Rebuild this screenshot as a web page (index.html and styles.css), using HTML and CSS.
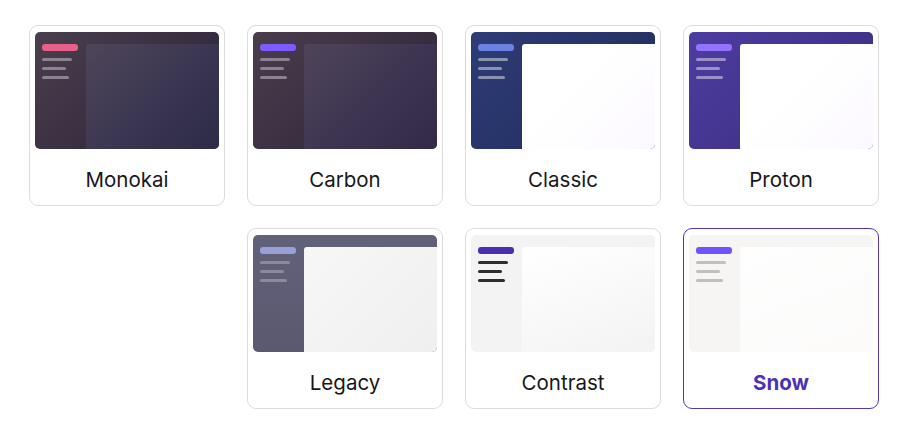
FILE: index.html
```html
<!DOCTYPE html>
<html lang="en">
<head>
<meta charset="utf-8">
<title>Themes</title>
<link rel="stylesheet" href="styles.css">
</head>
<body>
<div class="grid">
  <div class="card theme-monokai">
    <div class="preview"><div class="side"><span class="pill"></span><span class="ln l1"></span><span class="ln l2"></span><span class="ln l3"></span></div><div class="main"></div></div>
    <div class="label">Monokai</div>
  </div>
  <div class="card theme-carbon">
    <div class="preview"><div class="side"><span class="pill"></span><span class="ln l1"></span><span class="ln l2"></span><span class="ln l3"></span></div><div class="main"></div></div>
    <div class="label">Carbon</div>
  </div>
  <div class="card theme-classic">
    <div class="preview"><div class="side"><span class="pill"></span><span class="ln l1"></span><span class="ln l2"></span><span class="ln l3"></span></div><div class="main"></div></div>
    <div class="label">Classic</div>
  </div>
  <div class="card theme-proton">
    <div class="preview"><div class="side"><span class="pill"></span><span class="ln l1"></span><span class="ln l2"></span><span class="ln l3"></span></div><div class="main"></div></div>
    <div class="label">Proton</div>
  </div>
  <div class="card theme-legacy col2">
    <div class="preview"><div class="side"><span class="pill"></span><span class="ln l1"></span><span class="ln l2"></span><span class="ln l3"></span></div><div class="main"></div></div>
    <div class="label">Legacy</div>
  </div>
  <div class="card theme-contrast">
    <div class="preview"><div class="side"><span class="pill"></span><span class="ln l1"></span><span class="ln l2"></span><span class="ln l3"></span></div><div class="main"></div></div>
    <div class="label">Contrast</div>
  </div>
  <div class="card theme-snow selected">
    <div class="preview"><div class="side"><span class="pill"></span><span class="ln l1"></span><span class="ln l2"></span><span class="ln l3"></span></div><div class="main"></div></div>
    <div class="label">Snow</div>
  </div>
</div>
</body>
</html>
```
FILE: styles.css
```css
html, body {
  margin: 0;
  padding: 0;
  background: #ffffff;
  font-family: Inter, "Noto Sans", "Liberation Sans", sans-serif;
}

.grid {
  display: grid;
  grid-template-columns: repeat(4, 196px);
  grid-auto-rows: 181px;
  column-gap: 22px;
  row-gap: 22px;
  padding: 25px 0 0 29px;
}

.col2 {
  grid-column-start: 2;
}

.card {
  box-sizing: border-box;
  border: 1px solid #dcdcdc;
  border-radius: 9px;
  padding: 6px 5px 0 5px;
  display: flex;
  flex-direction: column;
  background: #fff;
}

.card.selected {
  border-color: #5038c0;
}

.preview {
  height: 117px;
  border-radius: 5px;
  overflow: hidden;
  display: flex;
  align-items: stretch;
}

.side {
  width: 51px;
  flex: none;
  display: flex;
  flex-direction: column;
  align-items: flex-start;
  padding: 12px 0 0 7px;
  box-sizing: border-box;
}

.pill {
  width: 36px;
  height: 7px;
  border-radius: 3px;
  margin-bottom: 7px;
}

.ln {
  height: 3px;
  border-radius: 2px;
  margin-bottom: 6px;
}
.l1 { width: 30px; }
.l2 { width: 24px; }
.l3 { width: 27px; }

.main {
  flex: 1;
  margin-top: 12px;
  border-top-left-radius: 3px;
}

.label {
  flex: 1;
  display: flex;
  align-items: center;
  justify-content: center;
  padding-top: 4px;
  font-size: 20.5px;
  color: #17171b;
}

.selected .label {
  color: #4a32b8;
  font-weight: 700;
}

/* Monokai */
.theme-monokai .preview { background: linear-gradient(135deg, #4a3f4d 0%, #3a3042 50%, #262238 100%); }
.theme-monokai .pill { background: #e86088; }
.theme-monokai .ln { background: #8c8290; }
.theme-monokai .main { background: linear-gradient(135deg, #4e4659 0%, #3c3752 50%, #2d2b48 100%); }

/* Carbon */
.theme-carbon .preview { background: linear-gradient(135deg, #4a3d4c 0%, #3b3042 50%, #282238 100%); }
.theme-carbon .pill { background: #7b5cff; }
.theme-carbon .ln { background: #8c8290; }
.theme-carbon .main { background: linear-gradient(135deg, #4f4559 0%, #3e3552 50%, #322a48 100%); }

/* Classic */
.theme-classic .preview { background: linear-gradient(135deg, #2f3c75 0%, #27346a 50%, #222c58 100%); }
.theme-classic .pill { background: #6a82e2; }
.theme-classic .ln { background: #8b92ad; }
.theme-classic .main { background: linear-gradient(135deg, #ffffff 0%, #ffffff 40%, #fbf8ff 100%); }

/* Proton */
.theme-proton .preview { background: linear-gradient(135deg, #4d3da0 0%, #43358f 50%, #3a2f7e 100%); }
.theme-proton .pill { background: #9272ff; }
.theme-proton .ln { background: #9c90c8; }
.theme-proton .main { background: linear-gradient(135deg, #ffffff 0%, #ffffff 40%, #fbf8ff 100%); }

/* Legacy */
.theme-legacy .preview { background: linear-gradient(180deg, #62617a 0%, #5a5970 100%); }
.theme-legacy .pill { background: #9a9ed6; }
.theme-legacy .ln { background: #8b8a9c; }
.theme-legacy .main { background: linear-gradient(135deg, #f7f7f7 0%, #efefef 100%); }

/* Contrast */
.theme-contrast .preview { background: #f3f3f3; }
.theme-contrast .pill { background: #4a30b0; }
.theme-contrast .ln { background: #2e2e30; }
.theme-contrast .main { background: linear-gradient(160deg, #ffffff 0%, #f9f9f9 50%, #f3f3f3 100%); }

/* Snow */
.theme-snow .preview { background: #f6f5f4; }
.theme-snow .pill { background: #7352ff; }
.theme-snow .ln { background: #c2bfbb; }
.theme-snow .main { background: linear-gradient(160deg, #fefefe 0%, #fcfbfa 100%); }
```
